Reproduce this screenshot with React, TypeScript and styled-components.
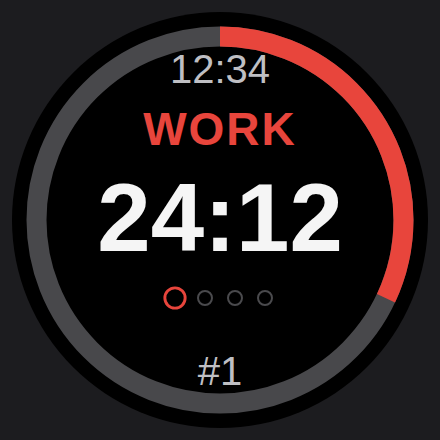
import React from "react";
import styled, { createGlobalStyle } from "styled-components";

const Global = createGlobalStyle`
  html, body { margin: 0; padding: 0; background: #1c1c1f; }
  body { font-family: "Liberation Sans", Arial, sans-serif; }
`;

const Page = styled.div`
  width: 440px;
  height: 440px;
  display: flex;
  align-items: center;
  justify-content: center;
`;

const Face = styled.div`
  position: relative;
  width: 416px;
  height: 416px;
  border-radius: 50%;
  background: #000;
  display: flex;
  flex-direction: column;
  align-items: center;
  padding-top: 37px;
  box-sizing: border-box;
`;

const Ring = styled.svg`
  position: absolute;
  inset: 0;
  width: 416px;
  height: 416px;
  pointer-events: none;
`;

const Clock = styled.div`
  font-size: 40px;
  line-height: 40px;
  color: #bfbfc3;
  font-weight: 400;
  position: relative;
`;

const Mode = styled.div`
  margin-top: 17px;
  font-size: 46px;
  line-height: 46px;
  font-weight: 700;
  letter-spacing: 2px;
  color: #e8453c;
`;

const Timer = styled.div`
  margin-top: 18px;
  font-size: 96px;
  line-height: 96px;
  font-weight: 700;
  color: #f5f5f5;
`;

const Dots = styled.div`
  margin-top: 24px;
  display: flex;
  gap: 14px;
`;

const Dot = styled.div<{ $active?: boolean }>`
  width: 16px;
  height: 16px;
  box-sizing: border-box;
  border-radius: 50%;
  border: 2px solid ${(p) => (p.$active ? "#e8453c" : "#4a4a4d")};
  transform: scale(${(p) => (p.$active ? 1.45 : 1)});
`;

const Round = styled.div`
  margin-top: 45px;
  font-size: 40px;
  line-height: 40px;
  color: #bfbfc3;
`;

const R = 183.5;
const C = 2 * Math.PI * R;
const progress = 0.32;

export default function App() {
  return (
    <>
      <Global />
      <Page>
        <Face>
          <Ring viewBox="0 0 416 416">
            <circle cx="208" cy="208" r={R} fill="none" stroke="#48484b" strokeWidth="20" />
            <circle
              cx="208"
              cy="208"
              r={R}
              fill="none"
              stroke="#e8453c"
              strokeWidth="20"
              strokeDasharray={`${C * progress} ${C}`}
              transform="rotate(-90 208 208)"
            />
          </Ring>
          <Clock>12:34</Clock>
          <Mode>WORK</Mode>
          <Timer>24:12</Timer>
          <Dots>
            <Dot $active />
            <Dot />
            <Dot />
            <Dot />
          </Dots>
          <Round>#1</Round>
        </Face>
      </Page>
    </>
  );
}
